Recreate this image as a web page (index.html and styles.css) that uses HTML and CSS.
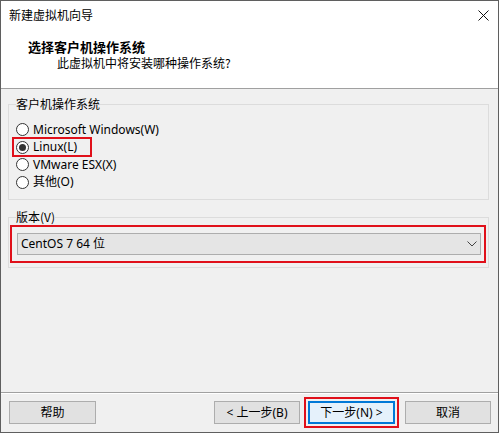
FILE: index.html
```html
<!DOCTYPE html>
<html lang="zh-CN">
<head>
<meta charset="utf-8">
<title>新建虚拟机向导</title>
<link rel="stylesheet" href="styles.css">
</head>
<body>
<div class="window">
  <div class="titlebar">
    <span class="title">新建虚拟机向导</span>
    <svg class="close" width="11" height="11" viewBox="0 0 11 11"><path d="M0.5 0.5 L10.5 10.5 M10.5 0.5 L0.5 10.5" stroke="#111" stroke-width="1" fill="none"/></svg>
  </div>
  <div class="header">
    <div class="h-title">选择客户机操作系统</div>
    <div class="h-sub">此虚拟机中将安装哪种操作系统?</div>
  </div>
  <div class="content">
    <fieldset class="group group-os">
      <legend>客户机操作系统</legend>
      <div class="radio-row"><span class="radio"></span><span class="label">Microsoft Windows(W)</span></div>
      <div class="radio-row marked"><span class="radio checked"></span><span class="label">Linux(L)</span><span class="mark mark-linux"></span></div>
      <div class="radio-row"><span class="radio"></span><span class="label">VMware ESX(X)</span></div>
      <div class="radio-row"><span class="radio"></span><span class="label">其他(O)</span></div>
    </fieldset>
    <fieldset class="group group-ver">
      <legend>版本(V)</legend>
      <div class="select">
        <span class="select-text">CentOS 7 64 位</span>
        <svg class="chevron" width="10" height="6" viewBox="0 0 10 6"><path d="M0.5 0.5 L5 5 L9.5 0.5" stroke="#444" stroke-width="1" fill="none"/></svg>
        <span class="mark mark-select"></span>
      </div>
    </fieldset>
  </div>
  <div class="footer">
    <button class="btn">帮助</button>
    <div class="spacer"></div>
    <button class="btn">&lt; 上一步(B)</button>
    <div class="primary-wrap">
      <button class="btn primary">下一步(N) &gt;</button>
      <span class="mark mark-next"></span>
    </div>
    <button class="btn cancel">取消</button>
  </div>
</div>
</body>
</html>
```

FILE: styles.css
```css
* { box-sizing: border-box; }
html, body { margin: 0; padding: 0; background: #ffffff; }
body {
  font-family: "Noto Sans", "Noto Sans CJK SC", sans-serif;
  font-size: 12px;
  color: #000;
}
.window {
  width: 499px;
  height: 433px;
  border: 1px solid #5f5f5f;
  background: #f0f0f0;
  display: flex;
  flex-direction: column;
}
.titlebar {
  height: 29px;
  background: #fff;
  display: flex;
  align-items: center;
  justify-content: space-between;
  padding: 0 9px 0 8px;
  line-height: 16px;
}
.close { display: block; }
.header {
  height: 59px;
  background: #fff;
  border-bottom: 1px solid #a0a0a0;
  padding-top: 8px;
}
.h-title {
  font-family: "Noto Sans CJK SC", sans-serif;
  font-weight: bold;
  font-size: 13px;
  line-height: 17px;
  padding-left: 27px;
}
.h-sub {
  font-family: "Noto Sans CJK SC", sans-serif;
  line-height: 16px;
  padding-left: 56px;
}
.content {
  flex: 1;
  padding: 7px 9px 0 7px;
  display: flex;
  flex-direction: column;
}
.group {
  margin: 0;
  border: 1px solid #dcdcdc;
  min-width: 0;
  padding: 0 7px 0 7px;
}
.group legend {
  padding: 0;
  margin: 0;
  line-height: 16px;
  font-family: "Noto Sans CJK SC", sans-serif;
}
.group-os { padding-top: 9px; padding-bottom: 8px; }
.group-ver { margin-top: 9px; padding-top: 8px; padding-bottom: 12px; }

.radio-row {
  position: relative;
  height: 17.5px;
  display: flex;
  align-items: center;
  gap: 4px;
  line-height: 16px;
}
.radio {
  width: 13px;
  height: 13px;
  border: 1px solid #333;
  border-radius: 50%;
  background: #fff;
  display: flex;
  align-items: center;
  justify-content: center;
  flex: none;
}
.radio.checked::after {
  content: "";
  width: 7px;
  height: 7px;
  border-radius: 50%;
  background: #333;
}
.mark {
  position: absolute;
  border: 2px solid #e0101a;
  pointer-events: none;
}
.mark-linux { left: -4px; top: -2px; width: 80px; height: 20px; }

.select {
  position: relative;
  margin-left: 1px;
  height: 22px;
  border: 1px solid #adadad;
  background: #e5e5e5;
  display: flex;
  align-items: center;
  justify-content: space-between;
  padding: 0 3px 0 3px;
  line-height: 16px;
}
.chevron { display: block; }
.mark-select { left: -8px; top: -9px; right: -6px; bottom: -9px; }

.footer {
  height: 40px;
  border-top: 1px solid #a0a0a0;
  box-shadow: inset 0 1px 0 #fff;
  display: flex;
  align-items: flex-start;
  padding: 8px 7px 0 8px;
}
.spacer { flex: 1; }
.btn {
  width: 86px;
  height: 23px;
  margin: 0;
  padding: 0;
  border: 1px solid #adadad;
  background: #e1e1e1;
  font-family: "Noto Sans", "Noto Sans CJK SC", sans-serif;
  font-size: 12px;
  line-height: 16px;
  color: #000;
}
.btn:first-child { width: 87px; }
.primary-wrap { position: relative; margin-left: 8px; }
.primary {
  display: block;
  border: 1px solid #0078d7;
  box-shadow: inset 0 0 0 1px #0078d7;
  background: #e5f1fb;
}
.mark-next { left: -4px; top: -4px; right: -4px; bottom: -4px; }
.cancel { margin-left: 10px; }
```
